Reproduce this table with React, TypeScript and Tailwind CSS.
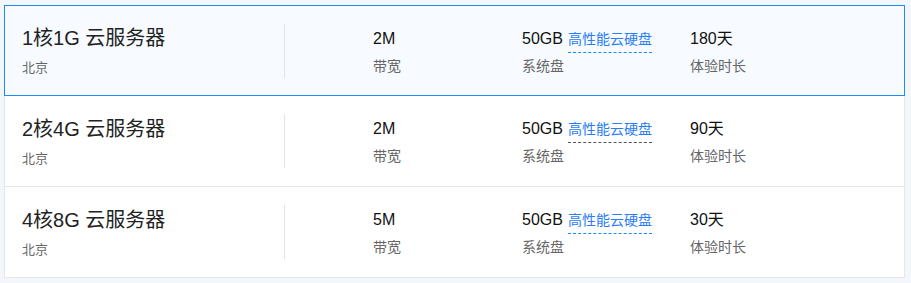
const plans = [
  { name: "1核1G 云服务器", bw: "2M", disk: "50GB", days: "180天", active: true, dashGray: false },
  { name: "2核4G 云服务器", bw: "2M", disk: "50GB", days: "90天", active: false, dashGray: true },
  { name: "4核8G 云服务器", bw: "5M", disk: "50GB", days: "30天", active: false, dashGray: false },
];

const font = {
  fontFamily: '"Liberation Sans", Arial, "Noto Sans CJK SC", sans-serif',
};

function PlanRow({ plan }: { plan: (typeof plans)[number] }) {
  return (
    <div
      className={
        "flex h-[91px] items-center " +
        (plan.active
          ? "border border-[#1a8cff] bg-[#f7fbff]"
          : "border-x border-b border-[#e6e6e6] bg-white")
      }
    >
      {/* name + region */}
      <div className="flex w-[280px] shrink-0 items-center pl-[17px]">
        <div className="flex w-[262px] flex-col pt-[1px]">
          <span className="text-[20px] leading-[24px] text-[#222]">{plan.name}</span>
          <span className="mt-[10px] text-[13px] leading-[16px] text-[#666]">北京</span>
        </div>
        <div className="h-[54px] w-px bg-[#e3e3e3]" />
      </div>

      <div className="ml-[88px] flex w-[149px] shrink-0 flex-col pt-[2px]">
        <span className="text-[16px] leading-[20px] text-[#111]">{plan.bw}</span>
        <span className="mt-[8px] text-[14px] leading-[18px] text-[#666]">带宽</span>
      </div>

      <div className="flex w-[168px] shrink-0 flex-col pt-[2px]">
        <div className="flex h-[20px] items-start text-[16px] leading-[20px] text-[#111]">
          <span>{plan.disk}</span>
          <span
            className={
              "ml-[5px] border-b border-dashed pb-[3px] text-[14px] leading-[20px] text-[#2a7bf6] " +
              (plan.dashGray ? "border-[#555]" : "border-[#1a8cff]")
            }
          >
            高性能云硬盘
          </span>
        </div>
        <span className="mt-[8px] text-[14px] leading-[18px] text-[#666]">系统盘</span>
      </div>

      <div className="flex flex-col pt-[2px]">
        <span className="text-[16px] leading-[20px] text-[#111]">{plan.days}</span>
        <span className="mt-[8px] text-[14px] leading-[18px] text-[#666]">体验时长</span>
      </div>
    </div>
  );
}

export default function App() {
  return (
    <div className="h-[283px] w-[911px] bg-[#f3f7fb] pl-[4px] pt-[5px]" style={font}>
      <div className="w-[901px]">
        {plans.map((p) => (
          <PlanRow key={p.name} plan={p} />
        ))}
      </div>
    </div>
  );
}
